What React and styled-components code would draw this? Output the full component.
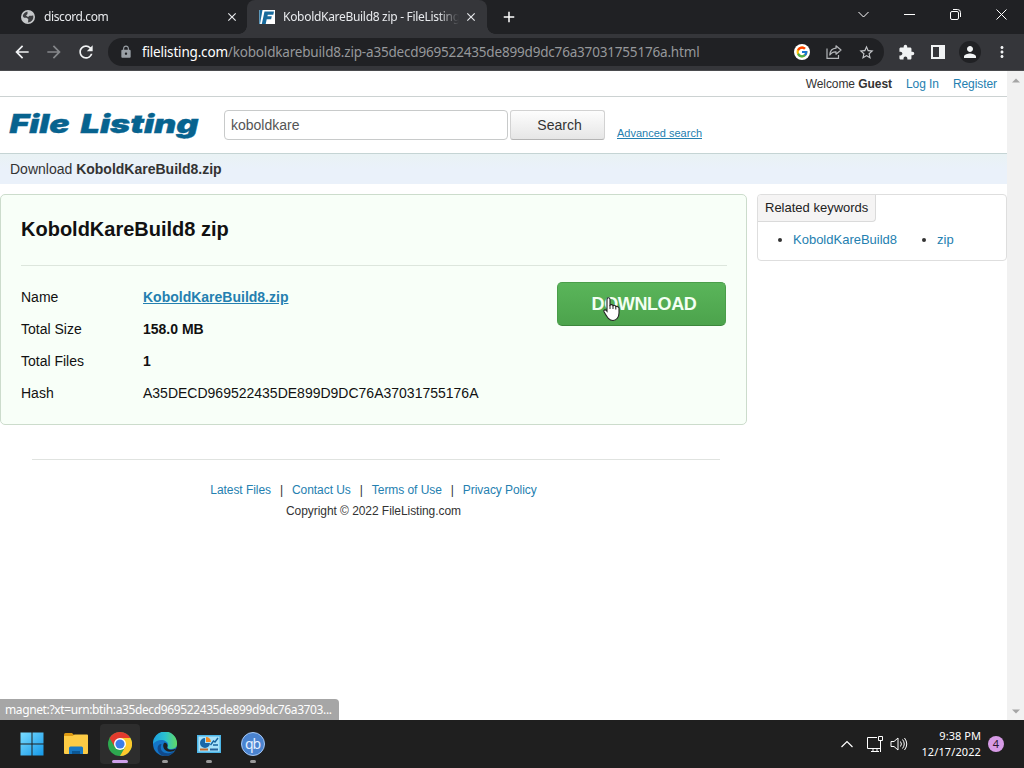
import React from 'react';
import styled, { createGlobalStyle } from 'styled-components';
import {
  MdArrowBack, MdArrowForward, MdRefresh, MdLock, MdStarBorder,
  MdExtension, MdPerson, MdMoreVert, MdClose, MdAdd
} from 'react-icons/md';
import { FcGoogle } from 'react-icons/fc';

const GlobalStyle = createGlobalStyle`
  * {
    box-sizing: border-box;
  }

  body {
    margin: 0;
    overflow: hidden;
    background: #fff;
    font-family: "Liberation Sans", Arial, sans-serif;
  }

  svg {
    display: block;
    flex: none;
  }
`

const Desktop = styled.div`
  display: flex;
  flex-direction: column;
  position: relative;
  width: 1024px;
  height: 768px;
  overflow: hidden;
`

/* browser chrome */

const TabStrip = styled.div`
  display: flex;
  height: 34px;
  background: #202124;
  color: #e8eaed;
  font: 12px/34px "Noto Sans", "Open Sans", sans-serif;
`

const Tab = styled.div`
  display: flex;
  align-items: center;
  position: relative;
  width: ${p => p.$active ? 240 : 247}px;
  padding-left: ${p => p.$active ? 12 : 20}px;
  background: ${p => p.$active ? '#35363a' : 'none'};
  border-radius: 8px 8px 0 0;

  &::before, &::after {
    content: "";
    display: ${p => p.$active ? 'block' : 'none'};
    position: absolute;
    bottom: 0;
    width: 8px;
    height: 8px;
  }

  &::before {
    left: -8px;
    background: radial-gradient(circle at 0 0, transparent 7.5px, #35363a 8px);
  }

  &::after {
    right: -8px;
    background: radial-gradient(circle at 100% 0, transparent 7.5px, #35363a 8px);
  }
`

const TabTitle = styled.span`
  width: ${p => p.$active ? 176 : 180}px;
  margin-left: 8px;
  overflow: hidden;
  white-space: nowrap;
  letter-spacing: ${p => p.$track}px;
  mask-image: linear-gradient(90deg, #000 88%, transparent);
`

const TabClose = styled.span`
  display: flex;
  margin-left: ${p => p.$gap}px;
`

const NewTab = styled.div`
  display: flex;
  align-items: center;
  padding-left: 13px;
  color: #fff;
`

const WindowButtons = styled.div`
  display: flex;
  align-items: center;
  height: 28px;
  margin-left: auto;
`

const WindowButton = styled.div`
  display: flex;
  justify-content: center;
  width: 46px;
`

const Toolbar = styled.div`
  display: flex;
  align-items: center;
  height: 37px;
  padding: 0 6px;
  background: #35363a;
  border-bottom: 1px solid #4a4b4e;
  color: #f1f3f4;
`

const ToolButton = styled.div`
  display: flex;
  align-items: center;
  justify-content: center;
  width: 32px;
  height: 28px;
  color: ${p => p.$dim ? '#85878a' : 'inherit'};
`

const Omnibox = styled.div`
  display: flex;
  align-items: center;
  width: 776px;
  height: 28px;
  margin: 0 6px;
  padding-left: 11px;
  background: #202124;
  border-radius: 14px;
  color: #9aa0a6;
`

const Url = styled.span`
  flex: 1;
  margin-left: 9px;
  font: 13.5px/28px "Noto Sans", "Open Sans", sans-serif;
  letter-spacing: -0.18px;
  white-space: nowrap;
  color: #96989b;

  b {
    font-weight: 400;
    color: #fff;
  }
`

const Avatar = styled.div`
  display: flex;
  align-items: center;
  justify-content: center;
  width: 22px;
  height: 22px;
  border-radius: 50%;
  background: #202124;
`

/* web page */

const Viewport = styled.div`
  display: flex;
  height: 649px;
`

const Page = styled.div`
  width: 1007px;
  color: #333;
  background: #fff;
`

const Scrollbar = styled.div`
  display: flex;
  flex-direction: column;
  justify-content: space-between;
  align-items: center;
  width: 17px;
  padding: 7px 0 6px;
  background: #f1f1f1;
`

const Link = styled.a`
  color: #2480b0;
  font-weight: ${p => p.$bold ? 700 : 400};
  text-decoration: ${p => p.$underline ? 'underline' : 'none'};
`

const UserBar = styled.div`
  display: flex;
  justify-content: flex-end;
  gap: 14px;
  height: 26px;
  padding-right: 10px;
  border-bottom: 1px solid #ccd2d2;
  font-size: 12px;
  line-height: 26px;
  letter-spacing: -0.07px;
`

const Header = styled.div`
  display: flex;
  align-items: center;
  height: 57px;
  padding-left: 8px;
  border-bottom: 1px solid #c5d4d4;
`

const SearchInput = styled.div`
  width: 284px;
  height: 30px;
  margin-left: 23px;
  padding-left: 6px;
  border: 1px solid #c8caca;
  border-radius: 4px;
  font-size: 14px;
  line-height: 28px;
  color: #555;
`

const SearchButton = styled.div`
  width: 95px;
  height: 30px;
  margin: 0 12px 0 2px;
  padding-left: 4px;
  border: 1px solid #d2d2d2;
  border-bottom-color: #b4b4b4;
  border-radius: 3px;
  background: linear-gradient(#fdfdfd, #e6e6e6);
  font-size: 14px;
  line-height: 28px;
  text-align: center;
`

const Advanced = styled.span`
  margin-top: 16px;
  font-size: 11px;
`

const Crumb = styled.div`
  height: 30px;
  padding-left: 10px;
  background: linear-gradient(#e9f2f4, #eaf1fa 50%);
  font-size: 14px;
  line-height: 31px;
`

const Columns = styled.div`
  display: flex;
  align-items: flex-start;
  gap: 10px;
  margin-top: 10px;
`

const FileBox = styled.div`
  width: 747px;
  height: 231px;
  padding: 0 19px 0 20px;
  border: 1px solid #ccdccc;
  border-radius: 5px;
  background: #f8fff8;
  color: #111;
`

const Title = styled.h1`
  height: 71px;
  margin: 0 0 15px;
  border-bottom: 1px solid #dde6dd;
  font-size: 20px;
  line-height: 68px;
`

const FileInfo = styled.div`
  display: flex;
  justify-content: space-between;
  padding-right: 1px;
`

const Details = styled.dl`
  display: grid;
  grid-template-columns: 122px auto;
  margin: 0;
  font-size: 14px;
  line-height: 32px;

  dd {
    margin: 0;
  }
`

const DownloadButton = styled.div`
  width: 169px;
  height: 44px;
  margin-top: 1px;
  padding-left: 5px;
  border: 1px solid #4a9e4a;
  border-bottom-color: #3c873c;
  border-radius: 5px;
  background: linear-gradient(#5ab55a, #4ca34c);
  color: #f3fff3;
  font-size: 18px;
  font-weight: 700;
  letter-spacing: -0.4px;
  line-height: 42px;
  text-align: center;
`

const Keywords = styled.div`
  width: 250px;
  height: 67px;
  border: 1px solid #dedede;
  border-radius: 4px;
  font-size: 13px;
`

const KeywordsTitle = styled.div`
  width: 118px;
  height: 27px;
  padding-left: 7px;
  border: solid #dadada;
  border-width: 0 1px 1px 0;
  border-radius: 4px 0 4px 0;
  background: #f5f4f4;
  line-height: 26px;
  white-space: nowrap;
  color: #222;
`

const KeywordList = styled.ul`
  display: flex;
  gap: 40px;
  margin: 0;
  padding: 0 0 0 35px;
  line-height: 36px;
`

const Footer = styled.div`
  width: 688px;
  margin: 34px 0 0 32px;
  padding: 20px 5px 0 0;
  border-top: 1px solid #e0e3e0;
  font-size: 12px;
  line-height: 21px;
  letter-spacing: -0.06px;
  text-align: center;
`

const FooterLinks = styled.div`
  display: flex;
  justify-content: center;
  gap: 9px;
`

const StatusBubble = styled.div`
  position: absolute;
  left: 0;
  top: 699px;
  width: 339px;
  height: 21px;
  padding-left: 5px;
  border-radius: 0 4px 0 0;
  background: #a6a6a6;
  color: #fff;
  font: 12px/21px "Noto Sans", "Open Sans", sans-serif;
  letter-spacing: -0.38px;
  white-space: nowrap;
`

const Pointer = styled.svg`
  position: absolute;
  left: 601px;
  top: 296px;
`

/* taskbar */

const Taskbar = styled.div`
  display: flex;
  align-items: center;
  height: 48px;
  padding: 0 20px 0 12px;
  background: #1f1f1f;
  color: #fff;
`

const TaskItem = styled.div`
  display: flex;
  flex-direction: column;
  align-items: center;
  width: 40px;
  height: 40px;
  margin-right: 4.200px;
  padding-top: 8px;
  border-radius: 4px;
  background: ${p => p.$active ? '#2d2d2d' : 'none'};

  &::after {
    content: "";
    width: ${p => p.$active ? 16 : p.$running ? 6 : 0}px;
    height: 3px;
    margin-top: 4px;
    border-radius: 2px;
    background: ${p => p.$active ? '#cfa0ea' : '#9a9a9a'};
  }
`

const Tray = styled.div`
  display: flex;
  align-items: center;
  margin-left: auto;
`

const Clock = styled.div`
  width: 64px;
  margin: 0 7px 0 9px;
  font: 11px/16px "Noto Sans", "Open Sans", sans-serif;
  letter-spacing: ${p => p.$track || 0}px;
  text-align: right;
  white-space: nowrap;
`

const Badge = styled.div`
  width: 16px;
  height: 16px;
  border-radius: 50%;
  background: #d79be6;
  color: #2a1830;
  font: 11px/16px "Noto Sans", sans-serif;
  text-align: center;
`

const GlobeIcon = () => (
  <svg width="16" height="16" viewBox="0 0 16 16">
    <circle cx="8" cy="8" r="6.2" fill="#3c3d40" stroke="#c6c8ca" strokeWidth="1.6" />
    <path d="M2 6.5l2 2.2h2.5l1.8 1.2-.3 3.8C5 14.500 1.500 11.500 2 6.500zM7.500 2l3.500.3 2.500 3-1 1.500H9.500L8 8 6 6.600 7.500 5z" fill="#c6c8ca" />
  </svg>
)

const Favicon = () => (
  <svg width="16" height="14" viewBox="0 0 16 14">
    <path d="M0 0h16v14H0z" fill="#fff" />
    <path d="M.3 0H3.500L1 14H.3z" fill="#176a9c" />
    <path d="M5.500 1.500H15l-.7 3.300H8.800l-.4 1.500h4.400l-.7 2.900H7.700L6.700 14H2.800z" fill="#176a9c" />
  </svg>
)

const Logo = () => (
  <svg
    width="193" height="40" viewBox="0 0 193 40"
    fill="#07638f" stroke="#07638f" strokeWidth=".4"
    fontFamily="Inter" fontWeight="900" fontStyle="italic" fontSize="26"
  >
    <text x="1.500" y="28" textLength="60" lengthAdjust="spacingAndGlyphs">File</text>
    <text x="72.500" y="28" textLength="118" lengthAdjust="spacingAndGlyphs">Listing</text>
  </svg>
)

const ShareIcon = () => (
  <svg width="16" height="16" viewBox="0 0 16 16" fill="none" stroke="#b4b6b9" strokeWidth="1.200">
    <path d="M1 4.500V14.400H12.500V11" />
    <path d="M10 1.800L15 6l-5 4.200V7.800C7 7.600 5.200 8.600 3.800 11 4 7 6.500 4.500 10 4.200z" strokeLinejoin="round" />
  </svg>
)

const WinIcon = ({ d, size = 11 }) => (
  <svg width={size} height={size} viewBox="0 0 11 11" fill="none" stroke="#fff" strokeWidth="1">
    <path d={d} />
  </svg>
)

const HandCursor = () => (
  <Pointer width="20" height="26" viewBox="0 0 20 26">
    <path
      d="M6 3.500C6 1.200 9 1.200 9 3.500V9.200C10 8.200 11.700 8.500 12 9.700 13.200 8.900 14.600 9.400 14.800 10.600 16.200 10 18 10.800 18 12.300V17C18 21 15.500 24.500 12 24.500 8.200 24.500 6.300 21.500 3 15.800 2.200 14.300 4.100 13.200 5.200 14.400L6 15.300z"
      fill="#fff" stroke="#222" strokeWidth="1.100"
    />
    <path d="M9 9v4M12 9.700V13M14.800 10.600V13.500" stroke="#222" strokeWidth="1" fill="none" />
  </Pointer>
)

const WindowsIcon = () => (
  <svg width="24" height="24" viewBox="0 0 24 24">
    <defs>
      <linearGradient id="win" x2="1" y2="1">
        <stop stopColor="#7adcff" />
        <stop offset="1" stopColor="#1498e8" />
      </linearGradient>
    </defs>
    <path d="M.5.500h11v11H.5zM12.500.500h11v11h-11zM.5 12.500h11v11H.5zM12.500 12.500h11v11h-11z" fill="url(#win)" />
  </svg>
)

const FolderIcon = () => (
  <svg width="24" height="24" viewBox="0 0 24 24">
    <path d="M0 2.500Q0 1 1.500 1H8l3 3h-11z" fill="#dd9a12" />
    <path d="M0 4h8.500l2-1.500H23q1 0 1 1V21q0 1-1 1H1q-1 0-1-1z" fill="#fccb45" />
    <path d="M5 22v-6q0-1.500 1.500-1.500h11q1.500 0 1.500 1.500v6z" fill="#1778c4" />
    <path d="M8 19h8v3H8z" fill="#0c5794" />
  </svg>
)

const ChromeIcon = () => (
  <svg width="24" height="24" viewBox="0 0 24 24">
    <circle cx="12" cy="12" r="12" fill="#2da94f" />
    <path d="M1.600 6A12 12 0 0 1 22.400 6H12v6L6.800 15z" fill="#e33b2e" />
    <path d="M22.400 6A12 12 0 0 1 12 24l5.200-9L12 6z" fill="#fdc92c" />
    <circle cx="12" cy="12" r="6" fill="#fff" />
    <circle cx="12" cy="12" r="4.600" fill="#3b7de8" />
  </svg>
)

const EdgeIcon = () => (
  <svg width="24" height="24" viewBox="0 0 24 24">
    <defs>
      <linearGradient id="edgeTop" x2="1">
        <stop stopColor="#1c9fe0" />
        <stop offset=".5" stopColor="#2bc0cf" />
        <stop offset="1" stopColor="#62db62" />
      </linearGradient>
    </defs>
    <circle cx="12" cy="12" r="12" fill="#1475c7" />
    <path d="M0 12A12 12 0 0 1 24 11C24.500 15 21.500 17 18 17 15 17 13.700 15.700 14.800 14 17 9 6 4.500 0 12z" fill="url(#edgeTop)" />
    <path d="M8.500 12C5.500 19 12 24.500 21.500 19.200 18 24 13 24.500 10 23.800 3 21 3 12 8.500 12z" fill="#114a8b" />
    <path d="M11 11C8.800 14 11 19.500 17 19.800c2.500 0 4.500-1 5.500-2 .8-.8.500-1.300-.5-.8C18 18.500 13 17.500 14.500 14.500 15 12.500 13 10 11 11z" fill="#1f1f1f" />
  </svg>
)

const ControlPanelIcon = () => (
  <svg width="24" height="24" viewBox="0 0 24 24">
    <path d="M0 3h24v18H0z" fill="#4cb6e8" />
    <path d="M1.500 4.500h21v15h-21z" fill="#a9e2fa" />
    <path d="M8 6a5 5 0 1 0 5 5H8z" fill="#1967a8" />
    <path d="M9 5a5 5 0 0 1 5 5H9z" fill="#f08a24" />
    <path d="M13.500 13l3-4 1.500 1 3-4M16 13h5" stroke="#17639d" strokeWidth="1.400" fill="none" />
    <path d="M3 17.500h8" stroke="#c46b2c" strokeWidth="2" />
    <path d="M13 17.500h8" stroke="#26639a" strokeWidth="2" />
  </svg>
)

const QbIcon = () => (
  <svg width="24" height="24" viewBox="0 0 24 24">
    <circle cx="12" cy="12" r="11.500" fill="#4a83cf" stroke="#a7c8f4" />
    <text x="12" y="16.500" fill="#e5f0ff" fontFamily="Noto Sans" fontSize="14" textAnchor="middle" textLength="16">qb</text>
  </svg>
)

const TASKS = [
  { icon: WindowsIcon },
  { icon: FolderIcon },
  { icon: ChromeIcon, active: true },
  { icon: EdgeIcon, running: true },
  { icon: ControlPanelIcon, running: true },
  { icon: QbIcon, running: true }
]

const FOOTER_LINKS = ['Latest Files', 'Contact Us', 'Terms of Use', 'Privacy Policy'];

const BrowserChrome = () => (
  <>
    <TabStrip>
      <Tab>
        <GlobeIcon />
        <TabTitle $track={-0.4}>discord.com</TabTitle>
        <TabClose $gap={1}><MdClose size={14} /></TabClose>
      </Tab>
      <Tab $active>
        <Favicon />
        <TabTitle $active $track={-0.3}>KoboldKareBuild8 zip - FileListing</TabTitle>
        <TabClose $gap={5}><MdClose size={14} /></TabClose>
      </Tab>
      <NewTab><MdAdd size={18} /></NewTab>
      <WindowButtons>
        <WindowButton><WinIcon d="M.5 3l5 5 5-5" /></WindowButton>
        <WindowButton><WinIcon d="M0 5.500h11" /></WindowButton>
        <WindowButton><WinIcon d="M2 2.500h5q1.500 0 1.500 1.500v5q0 1.500-1.500 1.500H2Q.5 10.500.5 9V4Q.5 2.500 2 2.500zM3 .500h4.500q3 0 3 3V8" /></WindowButton>
        <WindowButton><WinIcon d="M.5.500l10 10M10.500.500l-10 10" /></WindowButton>
      </WindowButtons>
    </TabStrip>
    <Toolbar>
      <ToolButton><MdArrowBack size={20} /></ToolButton>
      <ToolButton $dim><MdArrowForward size={20} /></ToolButton>
      <ToolButton><MdRefresh size={20} /></ToolButton>
      <Omnibox>
        <MdLock size={14} />
        <Url><b>filelisting.com</b>/koboldkarebuild8.zip-a35decd969522435de899d9dc76a37031755176a.html</Url>
        <ToolButton>
          <svg width="16" height="16" viewBox="0 0 16 16">
            <circle cx="8" cy="8" r="8" fill="#fff" />
            <FcGoogle x="1.5" y="1.5" size={13} />
          </svg>
        </ToolButton>
        <ToolButton><ShareIcon /></ToolButton>
        <ToolButton><MdStarBorder size={17} color="#c4c6c9" /></ToolButton>
        <span style={{ width: 2 }} />
      </Omnibox>
      <ToolButton><MdExtension size={17} /></ToolButton>
      <ToolButton>
        <svg width="14" height="14" viewBox="0 0 14 14">
          <path d="M0 0h14v14H0zM2 2v10h6V2z" fill="#f1f3f4" fillRule="evenodd" />
        </svg>
      </ToolButton>
      <ToolButton><Avatar><MdPerson size={18} /></Avatar></ToolButton>
      <ToolButton><MdMoreVert size={18} /></ToolButton>
    </Toolbar>
  </>
)

const FilePage = () => (
  <Page>
    <UserBar>
      <span>Welcome <b>Guest</b></span>
      <Link>Log In</Link>
      <Link>Register</Link>
    </UserBar>
    <Header>
      <Logo />
      <SearchInput>koboldkare</SearchInput>
      <SearchButton>Search</SearchButton>
      <Advanced><Link $underline>Advanced search</Link></Advanced>
    </Header>
    <Crumb>Download <b>KoboldKareBuild8.zip</b></Crumb>
    <Columns>
      <FileBox>
        <Title>KoboldKareBuild8 zip</Title>
        <FileInfo>
          <Details>
            <dt>Name</dt>
            <dd><Link $bold $underline>KoboldKareBuild8.zip</Link></dd>
            <dt>Total Size</dt>
            <dd><b>158.0 MB</b></dd>
            <dt>Total Files</dt>
            <dd><b>1</b></dd>
            <dt>Hash</dt>
            <dd>A35DECD969522435DE899D9DC76A37031755176A</dd>
          </Details>
          <DownloadButton>DOWNLOAD</DownloadButton>
        </FileInfo>
      </FileBox>
      <Keywords>
        <KeywordsTitle>Related keywords</KeywordsTitle>
        <KeywordList>
          <li><Link>KoboldKareBuild8</Link></li>
          <li><Link>zip</Link></li>
        </KeywordList>
      </Keywords>
    </Columns>
    <Footer>
      <FooterLinks>
        {FOOTER_LINKS.map((label, i) => (
          <React.Fragment key={label}>
            {i > 0 && <span>|</span>}
            <Link>{label}</Link>
          </React.Fragment>
        ))}
      </FooterLinks>
      <div>Copyright © 2022 FileListing.com</div>
    </Footer>
  </Page>
)

const App = () => (
  <Desktop>
    <GlobalStyle />
    <BrowserChrome />
    <Viewport>
      <FilePage />
      <Scrollbar>
        <svg width="8" height="5"><path d="M0 4.500L4 .500l4 4z" fill="#a5a5a5" /></svg>
        <svg width="8" height="5"><path d="M0 .500l4 4 4-4z" fill="#a5a5a5" /></svg>
      </Scrollbar>
    </Viewport>
    <StatusBubble>magnet:?xt=urn:btih:a35decd969522435de899d9dc76a3703...</StatusBubble>
    <Taskbar>
      {TASKS.map(({ icon: Icon, active, running }, i) => (
        <TaskItem key={i} $active={active} $running={running}><Icon /></TaskItem>
      ))}
      <Tray>
        <svg width="12" height="8" viewBox="0 0 12 8" fill="none" stroke="#fff" strokeWidth="1.200">
          <path d="M.5 7L6 1.500 11.500 7" />
        </svg>
        <svg width="18" height="18" viewBox="0 0 18 18" fill="none" stroke="#fff" style={{ marginLeft: 13 }}>
          <path d="M11 2.500H1.500v11H15M5 16.500h8M7 13.500v3M11 13.500v3M12.500 1.500h4v4h-4zM14.500 5.500V17" />
        </svg>
        <svg width="18" height="16" viewBox="0 0 18 16" fill="none" stroke="#fff" style={{ marginLeft: 6 }}>
          <path d="M1 5.500h3L8 2v12l-4-3.500H1zM10.500 5.500q1.800 2.500 0 5M12.500 3.500q3.500 4.500 0 9M14.500 2q4.500 6 0 12" />
        </svg>
        <div>
          <Clock $track={0.05}>9:38 PM</Clock>
          <Clock $track={0.1}>12/17/2022</Clock>
        </div>
        <Badge>4</Badge>
      </Tray>
    </Taskbar>
    <HandCursor />
  </Desktop>
)

export default App;
